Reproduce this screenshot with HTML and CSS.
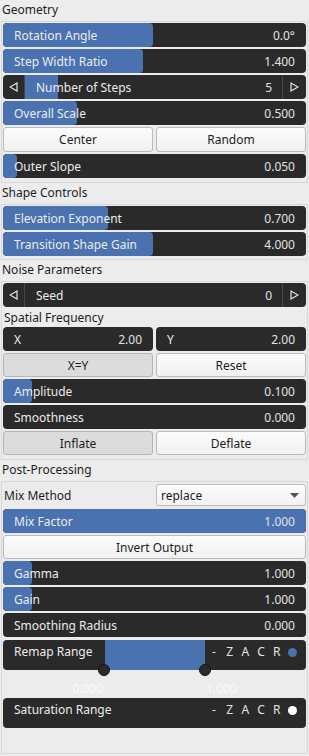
FILE: index.html
```html
<!DOCTYPE html>
<html>
<head>
<meta charset="utf-8">
<link rel="stylesheet" href="styles.css">
</head>
<body>
<div class="title">Geometry</div>
<div class="panel p1">
  <div class="slider"><div class="fill" style="width:49.5%"></div><span class="label">Rotation Angle</span><span class="value">0.0°</span></div>
  <div class="slider"><div class="fill" style="width:46.2%"></div><span class="label">Step Width Ratio</span><span class="value">1.400</span></div>
  <div class="stepper">
    <div class="step-btn left"><svg width="9" height="10" viewBox="0 0 9 10"><polygon points="8,1 8,9 1,5" fill="none" stroke="#e6e6e6" stroke-width="1.2"/></svg></div>
    <div class="step-mid"><div class="step-fill" style="width:12.9%"></div><span class="label">Number of Steps</span><span class="value">5</span></div>
    <div class="step-btn right"><svg width="9" height="10" viewBox="0 0 9 10"><polygon points="1,1 1,9 8,5" fill="none" stroke="#e6e6e6" stroke-width="1.2"/></svg></div>
  </div>
  <div class="slider"><div class="fill" style="width:24.4%"></div><span class="label">Overall Scale</span><span class="value">0.500</span></div>
  <div class="pair tall">
    <button class="btn">Center</button>
    <button class="btn">Random</button>
  </div>
  <div class="slider"><div class="fill" style="width:4.6%"></div><span class="label">Outer Slope</span><span class="value">0.050</span></div>
</div>

<div class="title">Shape Controls</div>
<div class="panel">
  <div class="slider"><div class="fill" style="width:34.7%"></div><span class="label">Elevation Exponent</span><span class="value">0.700</span></div>
  <div class="slider"><div class="fill" style="width:49.5%"></div><span class="label">Transition Shape Gain</span><span class="value">4.000</span></div>
</div>

<div class="title">Noise Parameters</div>
<div class="panel p3">
  <div class="stepper">
    <div class="step-btn left"><svg width="9" height="10" viewBox="0 0 9 10"><polygon points="8,1 8,9 1,5" fill="none" stroke="#e6e6e6" stroke-width="1.2"/></svg></div>
    <div class="step-mid"><span class="label">Seed</span><span class="value">0</span></div>
    <div class="step-btn right"><svg width="9" height="10" viewBox="0 0 9 10"><polygon points="1,1 1,9 8,5" fill="none" stroke="#e6e6e6" stroke-width="1.2"/></svg></div>
  </div>
  <div class="subtitle">Spatial Frequency</div>
  <div class="pair">
    <div class="slider"><span class="label">X</span><span class="value">2.00</span></div>
    <div class="slider"><span class="label">Y</span><span class="value">2.00</span></div>
  </div>
  <div class="pair">
    <button class="btn pressed">X=Y</button>
    <button class="btn">Reset</button>
  </div>
  <div class="slider"><div class="fill" style="width:9.6%"></div><span class="label">Amplitude</span><span class="value">0.100</span></div>
  <div class="slider"><span class="label">Smoothness</span><span class="value">0.000</span></div>
  <div class="pair">
    <button class="btn pressed">Inflate</button>
    <button class="btn">Deflate</button>
  </div>
</div>

<div class="title">Post-Processing</div>
<div class="panel last">
  <div class="pair combo-row">
    <span class="plain-label">Mix Method</span>
    <div class="combo"><span>replace</span><svg width="9" height="5" viewBox="0 0 9 5"><polygon points="0,0 9,0 4.5,5" fill="#555"/></svg></div>
  </div>
  <div class="slider"><div class="fill" style="width:100%"></div><span class="label">Mix Factor</span><span class="value">1.000</span></div>
  <button class="btn">Invert Output</button>
  <div class="slider"><div class="fill" style="width:9.6%"></div><span class="label">Gamma</span><span class="value">1.000</span></div>
  <div class="slider"><div class="fill" style="width:9.6%"></div><span class="label">Gain</span><span class="value">1.000</span></div>
  <div class="slider"><span class="label">Smoothing Radius</span><span class="value">0.000</span></div>
  <div class="range first">
    <div class="range-bar">
      <div class="range-fill" style="left:33.7%;width:33%"></div>
      <span class="label">Remap Range</span>
      <div class="flags"><span>-</span><span>Z</span><span>A</span><span>C</span><span>R</span><i class="dot blue"></i></div>
    </div>
    <i class="knob" style="left:31.4%"></i>
    <i class="knob" style="left:64.7%"></i>
  </div>
  <div class="range-labels"><span class="lo">0.000</span><span class="hi">1.000</span></div>
  <div class="range">
    <div class="range-bar">
      <span class="label">Saturation Range</span>
      <div class="flags"><span>-</span><span>Z</span><span>A</span><span>C</span><span>R</span><i class="dot white"></i></div>
    </div>
  </div>
</div>
</body>
</html>
```

FILE: styles.css
```css
* { box-sizing: border-box; }
html, body { margin: 0; padding: 0; }
body {
  width: 309px;
  height: 756px;
  overflow: hidden;
  background: #ececec;
  font-family: "Noto Sans", "Open Sans", sans-serif;
  font-size: 12px;
  color: #1c1c1c;
}
.title {
  height: 21px;
  line-height: 20px;
  padding-left: 2px;
}
.panel {
  margin: 0 1px;
  border: 1px solid #d8d8d8;
  padding: 1px 1px 3px;
  display: flex;
  flex-direction: column;
  gap: 2px;
}
.panel.p1 { padding-bottom: 4px; }
.panel.p3 { padding-bottom: 4px; }
.panel.last { height: 273px; }
.slider {
  position: relative;
  height: 24px;
  background: #2a2a2a;
  border-radius: 4px;
  overflow: hidden;
  display: flex;
  align-items: center;
  justify-content: space-between;
  padding: 0 11px 0 11px;
  color: #ececec;
}
.fill {
  position: absolute;
  left: 0; top: 0; bottom: 0;
  background: #4a72b0;
  border-radius: 4px;
}
.label, .value { position: relative; white-space: nowrap; }
.value { color: #e2e2e2; }
.stepper {
  height: 24px;
  background: #2a2a2a;
  border-radius: 4px;
  overflow: hidden;
  display: flex;
  color: #ececec;
}
.step-btn {
  width: 22px;
  display: flex;
  align-items: center;
  justify-content: center;
  flex: none;
}
.step-btn.left { border-right: 1px solid #474747; width: 22px; }
.step-btn.right { border-left: 1px solid #474747; width: 24px; }
.step-mid {
  position: relative;
  flex: 1;
  display: flex;
  align-items: center;
  justify-content: space-between;
  padding: 0 10px 0 11px;
}
.step-fill {
  position: absolute;
  left: 0; top: 0; bottom: 0;
  background: #4a72b0;
}
.pair {
  display: grid;
  grid-template-columns: 1fr 1fr;
  gap: 3px;
}
.pair.tall .btn { height: 25px; }
.btn {
  height: 24px;
  font: inherit;
  color: #1c1c1c;
  background: linear-gradient(#fcfcfc, #f1f1f1);
  border: 1px solid #b9b9b9;
  border-radius: 3px;
  padding: 0;
}
.btn.pressed {
  background: #dcdcdc;
  border-color: #b4b4b4;
}
.subtitle {
  height: 17px;
  line-height: 19px;
  padding-left: 1px;
  margin-top: -1px;
}
.combo-row { height: 24px; align-items: center; }
.plain-label { padding-left: 1px; }
.combo {
  height: 22px;
  display: flex;
  align-items: center;
  justify-content: space-between;
  padding: 0 6px 0 4px;
  background: linear-gradient(#fcfcfc, #f2f2f2);
  border: 1px solid #bcbcbc;
  border-radius: 3px;
}
.range { position: relative; }
.range.first { margin-top: 1px; }
.range-bar {
  position: relative;
  height: 30px;
  background: #2a2a2a;
  border-radius: 4px;
  overflow: hidden;
  display: flex;
  align-items: flex-start;
  justify-content: space-between;
  padding: 0 9px 0 11px;
  color: #ececec;
  line-height: 24px;
}
.range-fill {
  position: absolute;
  top: 0; bottom: 0;
  background: #4a72b0;
}
.flags {
  position: relative;
  display: flex;
  align-items: center;
  height: 24px;
}
.flags span {
  width: 15.7px;
  text-align: center;
  color: #e4e4e4;
}
.dot {
  display: block;
  width: 9px;
  height: 9px;
  border-radius: 50%;
  margin-left: 3.5px;
}
.dot.blue { background: #4a72b0; }
.dot.white { background: #ffffff; }
.knob {
  position: absolute;
  bottom: -6px;
  width: 12px;
  height: 12px;
  border-radius: 50%;
  background: #2a2a2a;
  border: 1px solid #151515;
}
.range-labels {
  height: 24px;
  position: relative;
  display: flex;
  color: #fafafa;
  padding-top: 9px;
  line-height: 16px;
}
.range-labels .lo { width: 100px; text-align: right; }
.range-labels .hi { margin-left: 103px; }
```
